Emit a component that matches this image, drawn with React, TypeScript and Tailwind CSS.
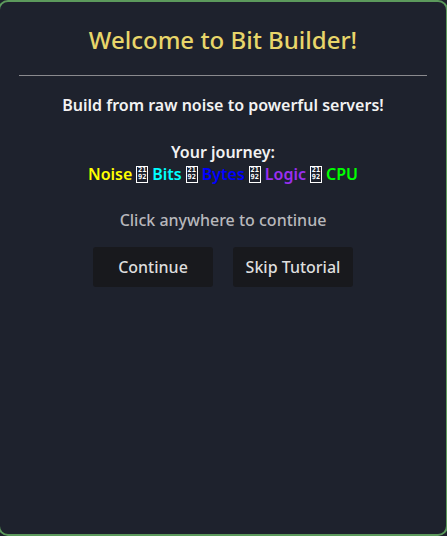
import React from "react";

function Tofu() {
  return (
    <span className="inline-flex flex-col items-center justify-center mx-[4px] w-[12px] h-[17px] border border-white leading-[7px] text-[7px] text-white font-bold" style={{ fontFamily: '"DejaVu Sans Mono", monospace' }}>
      <span>21</span>
      <span>92</span>
    </span>
  );
}

export default function App() {
  return (
    <div className="w-[447px] h-[536px] overflow-hidden bg-[#1e222d]" style={{ fontFamily: '"Noto Sans", "Open Sans", sans-serif' }}>
      <div className="ml-[-2px] w-[450px] h-[536px] border-2 border-[#5c9a5c] rounded-[10px] bg-[#1e222d] px-[19px] pt-[23px] flex flex-col items-center">
        <h1 className="text-[24px] leading-[30px] font-medium text-[#e8d66a]">Welcome to Bit Builder!</h1>
        <div className="w-full h-px bg-[#8a8a8e] mt-[20px]"></div>
        <p className="mt-[18px] text-[16px] leading-[22px] font-semibold text-[#f2f2f2]">Build from raw noise to powerful servers!</p>
        <p className="mt-[25px] text-[16px] leading-[22px] font-semibold text-[#f2f2f2]">Your journey:</p>
        <div className="h-[22px] flex items-center text-[16px] leading-[22px] font-semibold">
          <span className="text-[#ffff00]">Noise</span>
          <Tofu />
          <span className="text-[#00ffff]">Bits</span>
          <Tofu />
          <span className="text-[#0000ff]">Bytes</span>
          <Tofu />
          <span className="text-[#9a2ff0]">Logic</span>
          <Tofu />
          <span className="text-[#00ff00]">CPU</span>
        </div>
        <p className="mt-[24px] text-[16px] leading-[22px] font-medium text-[#b8b8bc]">Click anywhere to continue</p>
        <div className="mt-[16px] flex gap-[20px]">
          <button className="w-[120px] h-[40px] rounded-[3px] bg-[#18191d] text-[16px] font-medium text-[#dedede]">Continue</button>
          <button className="w-[120px] h-[40px] rounded-[3px] bg-[#18191d] text-[16px] font-medium text-[#dedede]">Skip Tutorial</button>
        </div>
      </div>
    </div>
  );
}
